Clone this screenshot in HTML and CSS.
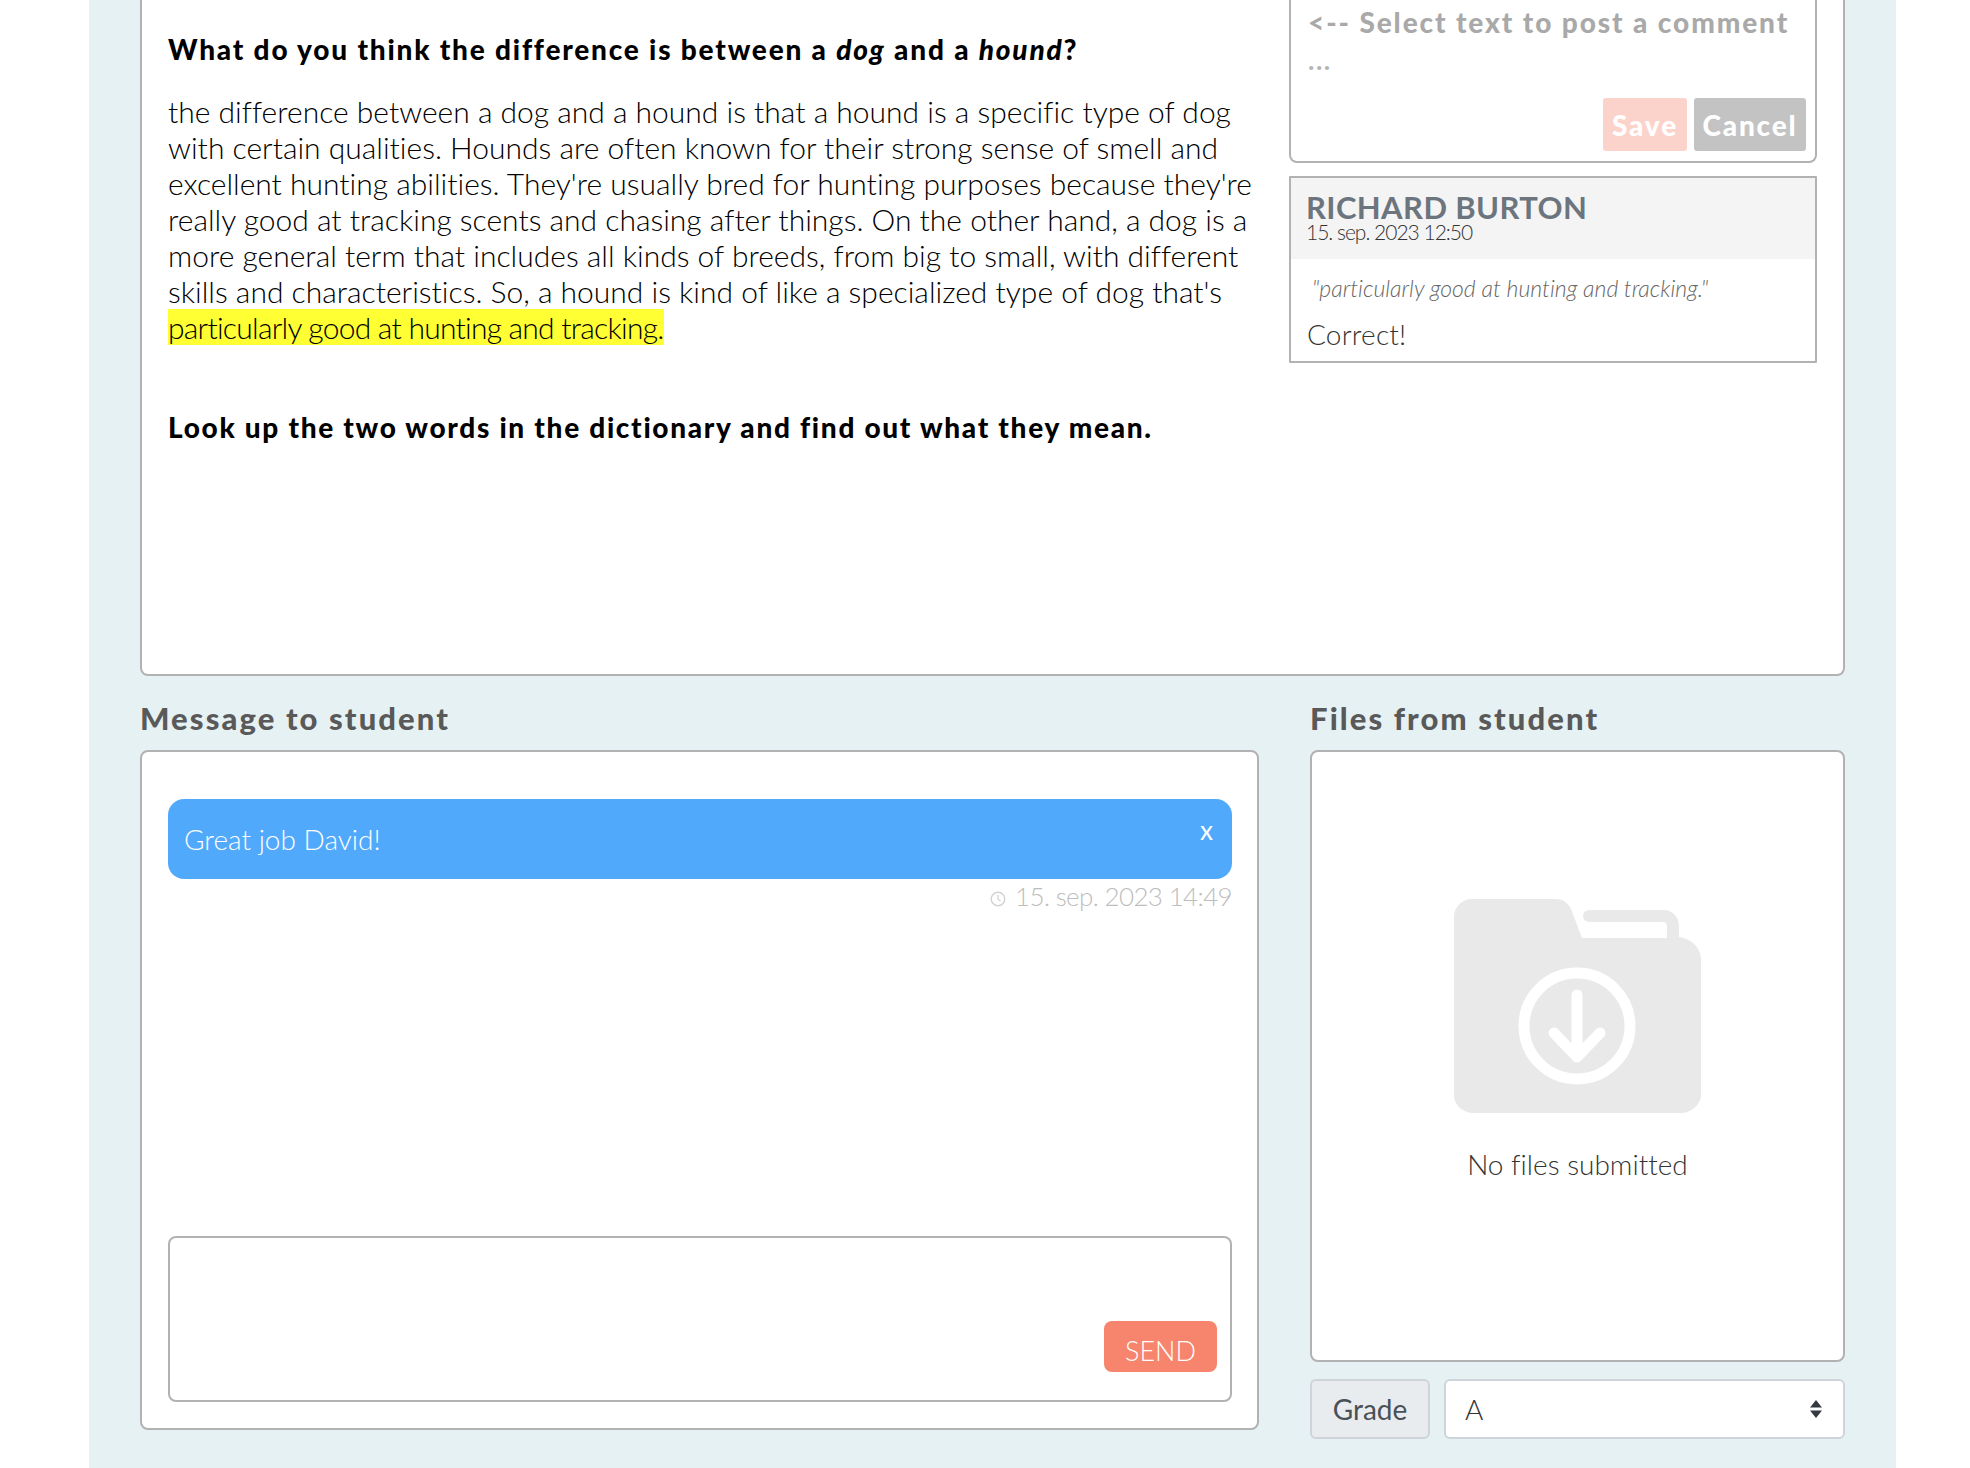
FILE: index.html
```html
<!DOCTYPE html>
<html lang="en">
<head>
    <meta charset="UTF-8">
    <title>Assignment review</title>
    <link rel="stylesheet" href="styles.css">
</head>
<body>
    <main class="panel">
        <section class="answer-card">
            <div class="answer-text">
                <h3 class="question">What do you think the difference is between a <em>dog</em> and a <em>hound</em>?</h3>
                <p class="answer">the difference between a dog and a hound is that a hound is a specific type of dog with certain qualities. Hounds are often known for their strong sense of smell and excellent hunting abilities. They're usually bred for hunting purposes because they're really good at tracking scents and chasing after things. On the other hand, a dog is a more general term that includes all kinds of breeds, from big to small, with different skills and characteristics. So, a hound is kind of like a specialized type of dog that's <mark>particularly good at hunting and tracking.</mark></p>
                <h3 class="question question-last">Look up the two words in the dictionary and find out what they mean.</h3>
            </div>
            <aside class="comments">
                <div class="comment-form">
                    <div class="comment-hint">&lt;-- Select text to post a comment</div>
                    <div class="comment-dots">...</div>
                    <div class="comment-actions">
                        <button class="btn-save">Save</button>
                        <button class="btn-cancel">Cancel</button>
                    </div>
                </div>
                <div class="comment">
                    <div class="comment-head">
                        <div class="comment-author">RICHARD BURTON</div>
                        <div class="comment-date">15. sep. 2023 12:50</div>
                    </div>
                    <div class="comment-quote">"particularly good at hunting and tracking."</div>
                    <div class="comment-body">Correct!</div>
                </div>
            </aside>
        </section>

        <section class="bottom-row">
            <div class="message-col">
                <h4 class="section-title">Message to student</h4>
                <div class="message-card">
                    <div class="bubble">
                        <span>Great job David!</span>
                        <span class="bubble-close">x</span>
                    </div>
                    <div class="timestamp">
                        <svg class="clock" viewBox="0 0 16 16" width="16" height="16">
                            <circle cx="8" cy="8" r="6.8" fill="none" stroke="#d2d2d2" stroke-width="1.4"/>
                            <path d="M8 4v4.3l2.6 1.6" fill="none" stroke="#d2d2d2" stroke-width="1.2"/>
                        </svg>
                        <span>15. sep. 2023 14:49</span>
                    </div>
                    <div class="message-input">
                        <button class="btn-send">SEND</button>
                    </div>
                </div>
            </div>
            <div class="files-col">
                <h4 class="section-title">Files from student</h4>
                <div class="files-card">
                    <svg class="folder" viewBox="0 0 247 214" width="247" height="214">
                        <path fill="#e9e9e9" d="M18 0H102C109 0 114 4 117 10L128 39H213V38H224C237 39 247 49 247 60V196C247 206 237 214 226 214H20C9 214 0 206 0 196V18C0 8 8 0 18 0Z"/>
                        <path fill="none" stroke="#e9e9e9" stroke-width="12" stroke-linecap="round" d="M135 17H209C216 17 219 22 219 28V42"/>
                        <circle cx="123" cy="127" r="53" fill="none" stroke="#fff" stroke-width="11"/>
                        <path fill="none" stroke="#fff" stroke-width="11" stroke-linecap="round" stroke-linejoin="round" d="M123 96V158M100 134L123 158L146 134"/>
                    </svg>
                    <div class="files-empty">No files submitted</div>
                </div>
                <div class="grade-row">
                    <label class="grade-label">Grade</label>
                    <div class="grade-select">
                        <span>A</span>
                        <svg viewBox="0 0 14 20" width="14" height="20">
                            <path fill="#343a40" d="M7 1L13 8.500H1ZM7 19L1 11.500H13Z"/>
                        </svg>
                    </div>
                </div>
            </div>
        </section>
    </main>
</body>
</html>
```

FILE: styles.css
```css
body {
    margin: 0;
    background-color: #fff;
    font-family: "Lato", "Open Sans", sans-serif;
    font-variant-ligatures: none;
    color: #111;
}

.panel {
    height: 1468px;
    box-sizing: border-box;
    margin-left: 89px;
    width: 1807px;
    padding: 0 51px;
    background-color: #e6f1f3;
}

/* Answer card */
.answer-card {
    display: flex;
    height: 676px;
    box-sizing: border-box;
    padding: 0 26px 0 26px;
    background-color: #fff;
    border: 2px solid #b2b2b2;
    border-top: none;
    border-radius: 0 0 8px 8px;
}

.answer-text {
    width: 1095px;
    flex-shrink: 0;
}

.question {
    margin: 32px 0 0;
    font-size: 28px;
    line-height: 34px;
    font-weight: 900;
    letter-spacing: 1.8px;
    color: #000;
}

.question-last {
    margin-top: 65px;
    letter-spacing: 1.7px;
}

.answer {
    margin: 27px 0 0;
    font-size: 30px;
    line-height: 36px;
    font-weight: 300;
    color: #000;
}

mark {
    background-color: #ffff33;
    color: #000;
    letter-spacing: -0.75px;
}

/* Comments */
.comments {
    width: 528px;
    margin-left: 26px;
}

.comment-form {
    height: 163px;
    box-sizing: border-box;
    padding-top: 6px;
    padding-left: 17px;
    padding-right: 9px;
    border: 2px solid #b2b2b2;
    border-top: none;
    border-radius: 0 0 8px 8px;
}

.comment-hint {
    font-size: 28px;
    line-height: 32px;
    font-weight: 900;
    letter-spacing: 1.9px;
    color: #a9a9a9;
}

.comment-dots {
    font-size: 27px;
    line-height: 24px;
    height: 34px;
    margin-top: 10px;
    font-weight: 700;
    letter-spacing: 1.5px;
    color: #b5b5b5;
}

.comment-actions {
    display: flex;
    justify-content: flex-end;
    gap: 7px;
    margin-top: 16px;
}

.comment-actions button {
    height: 53px;
    padding: 0;
    border: none;
    border-radius: 3px;
    font-family: inherit;
    font-size: 28px;
    font-weight: 900;
    letter-spacing: 1.8px;
    color: #fff;
}

.btn-save {
    width: 84px;
    background-color: #fbd3cb;
}

.btn-cancel {
    width: 112px;
    background-color: #c3c3c3;
}

.comment {
    height: 187px;
    box-sizing: border-box;
    margin-top: 13px;
    border: 2px solid #b2b2b2;
    border-radius: 1px;
}

.comment-head {
    height: 81px;
    box-sizing: border-box;
    padding: 13px 15px 0;
    background-color: #f4f4f4;
}

.comment-author {
    font-size: 31px;
    line-height: 32px;
    font-weight: 700;
    letter-spacing: 0.4px;
    color: #6c757d;
}

.comment-date {
    font-size: 21px;
    line-height: 18px;
    font-weight: 300;
    letter-spacing: -1px;
    color: #333;
}

.comment-quote {
    margin: 15px 0 0 21px;
    font-size: 23px;
    line-height: 28px;
    font-weight: 300;
    font-style: italic;
    color: #666;
}

.comment-body {
    margin: 15px 0 0 16px;
    font-size: 28px;
    line-height: 34px;
    font-weight: 300;
    letter-spacing: 0.2px;
    color: #333;
}

/* Bottom row */
.bottom-row {
    display: flex;
    gap: 51px;
}

.message-col {
    width: 1119px;
}

.files-col {
    width: 535px;
}

.section-title {
    margin: 24px 0 0;
    height: 50px;
    font-size: 31px;
    line-height: 36px;
    font-weight: 900;
    letter-spacing: 2.1px;
    color: #595959;
}

.message-card {
    height: 680px;
    box-sizing: border-box;
    padding: 47px 25px 0 26px;
    background-color: #fff;
    border: 2px solid #b2b2b2;
    border-radius: 8px;
}

.bubble {
    display: flex;
    justify-content: space-between;
    height: 80px;
    box-sizing: border-box;
    padding: 19px 19px 0 16px;
    background-color: #51a9fc;
    border-radius: 16px;
    font-size: 28px;
    line-height: 36px;
    font-weight: 300;
    color: #fff;
}

.bubble span:first-child {
    padding-top: 3px;
}

.bubble-close {
    font-size: 26px;
    line-height: 24px;
    font-weight: 400;
}

.timestamp {
    display: flex;
    justify-content: flex-end;
    align-items: center;
    gap: 9px;
    height: 34px;
    padding-bottom: 2px;
    font-size: 26px;
    line-height: 34px;
    font-weight: 300;
    letter-spacing: -0.65px;
    color: #bdbdbd;
}

.clock {
    margin-top: 5px;
}

.message-input {
    display: flex;
    justify-content: flex-end;
    align-items: flex-end;
    height: 166px;
    box-sizing: border-box;
    margin-top: 321px;
    padding: 0 13px 28px 0;
    border: 2px solid #b2b2b2;
    border-radius: 8px;
}

.btn-send {
    width: 113px;
    height: 51px;
    padding: 8px 0 0;
    border: none;
    border-radius: 8px;
    background-color: #f7846c;
    font-family: inherit;
    font-size: 27px;
    font-weight: 300;
    color: #fff;
}

.files-card {
    display: flex;
    flex-direction: column;
    align-items: center;
    height: 612px;
    box-sizing: border-box;
    padding-top: 147px;
    background-color: #fff;
    border: 2px solid #b2b2b2;
    border-radius: 8px;
}

.files-empty {
    margin-top: 33px;
    font-size: 28px;
    line-height: 36px;
    font-weight: 300;
    color: #333;
}

.grade-row {
    display: flex;
    gap: 14px;
    margin-top: 17px;
}

.grade-label {
    width: 120px;
    height: 60px;
    box-sizing: border-box;
    background-color: #e9ecef;
    border: 2px solid #ced4da;
    border-radius: 6px;
    text-align: center;
    font-size: 28px;
    line-height: 56px;
    font-weight: 400;
    color: #495057;
}

.grade-select {
    display: flex;
    flex: 1;
    justify-content: space-between;
    align-items: center;
    height: 60px;
    box-sizing: border-box;
    padding: 0 20px 0 19px;
    background-color: #fff;
    border: 2px solid #ced4da;
    border-radius: 6px;
    font-size: 28px;
    font-weight: 300;
    color: #333;
}
```
